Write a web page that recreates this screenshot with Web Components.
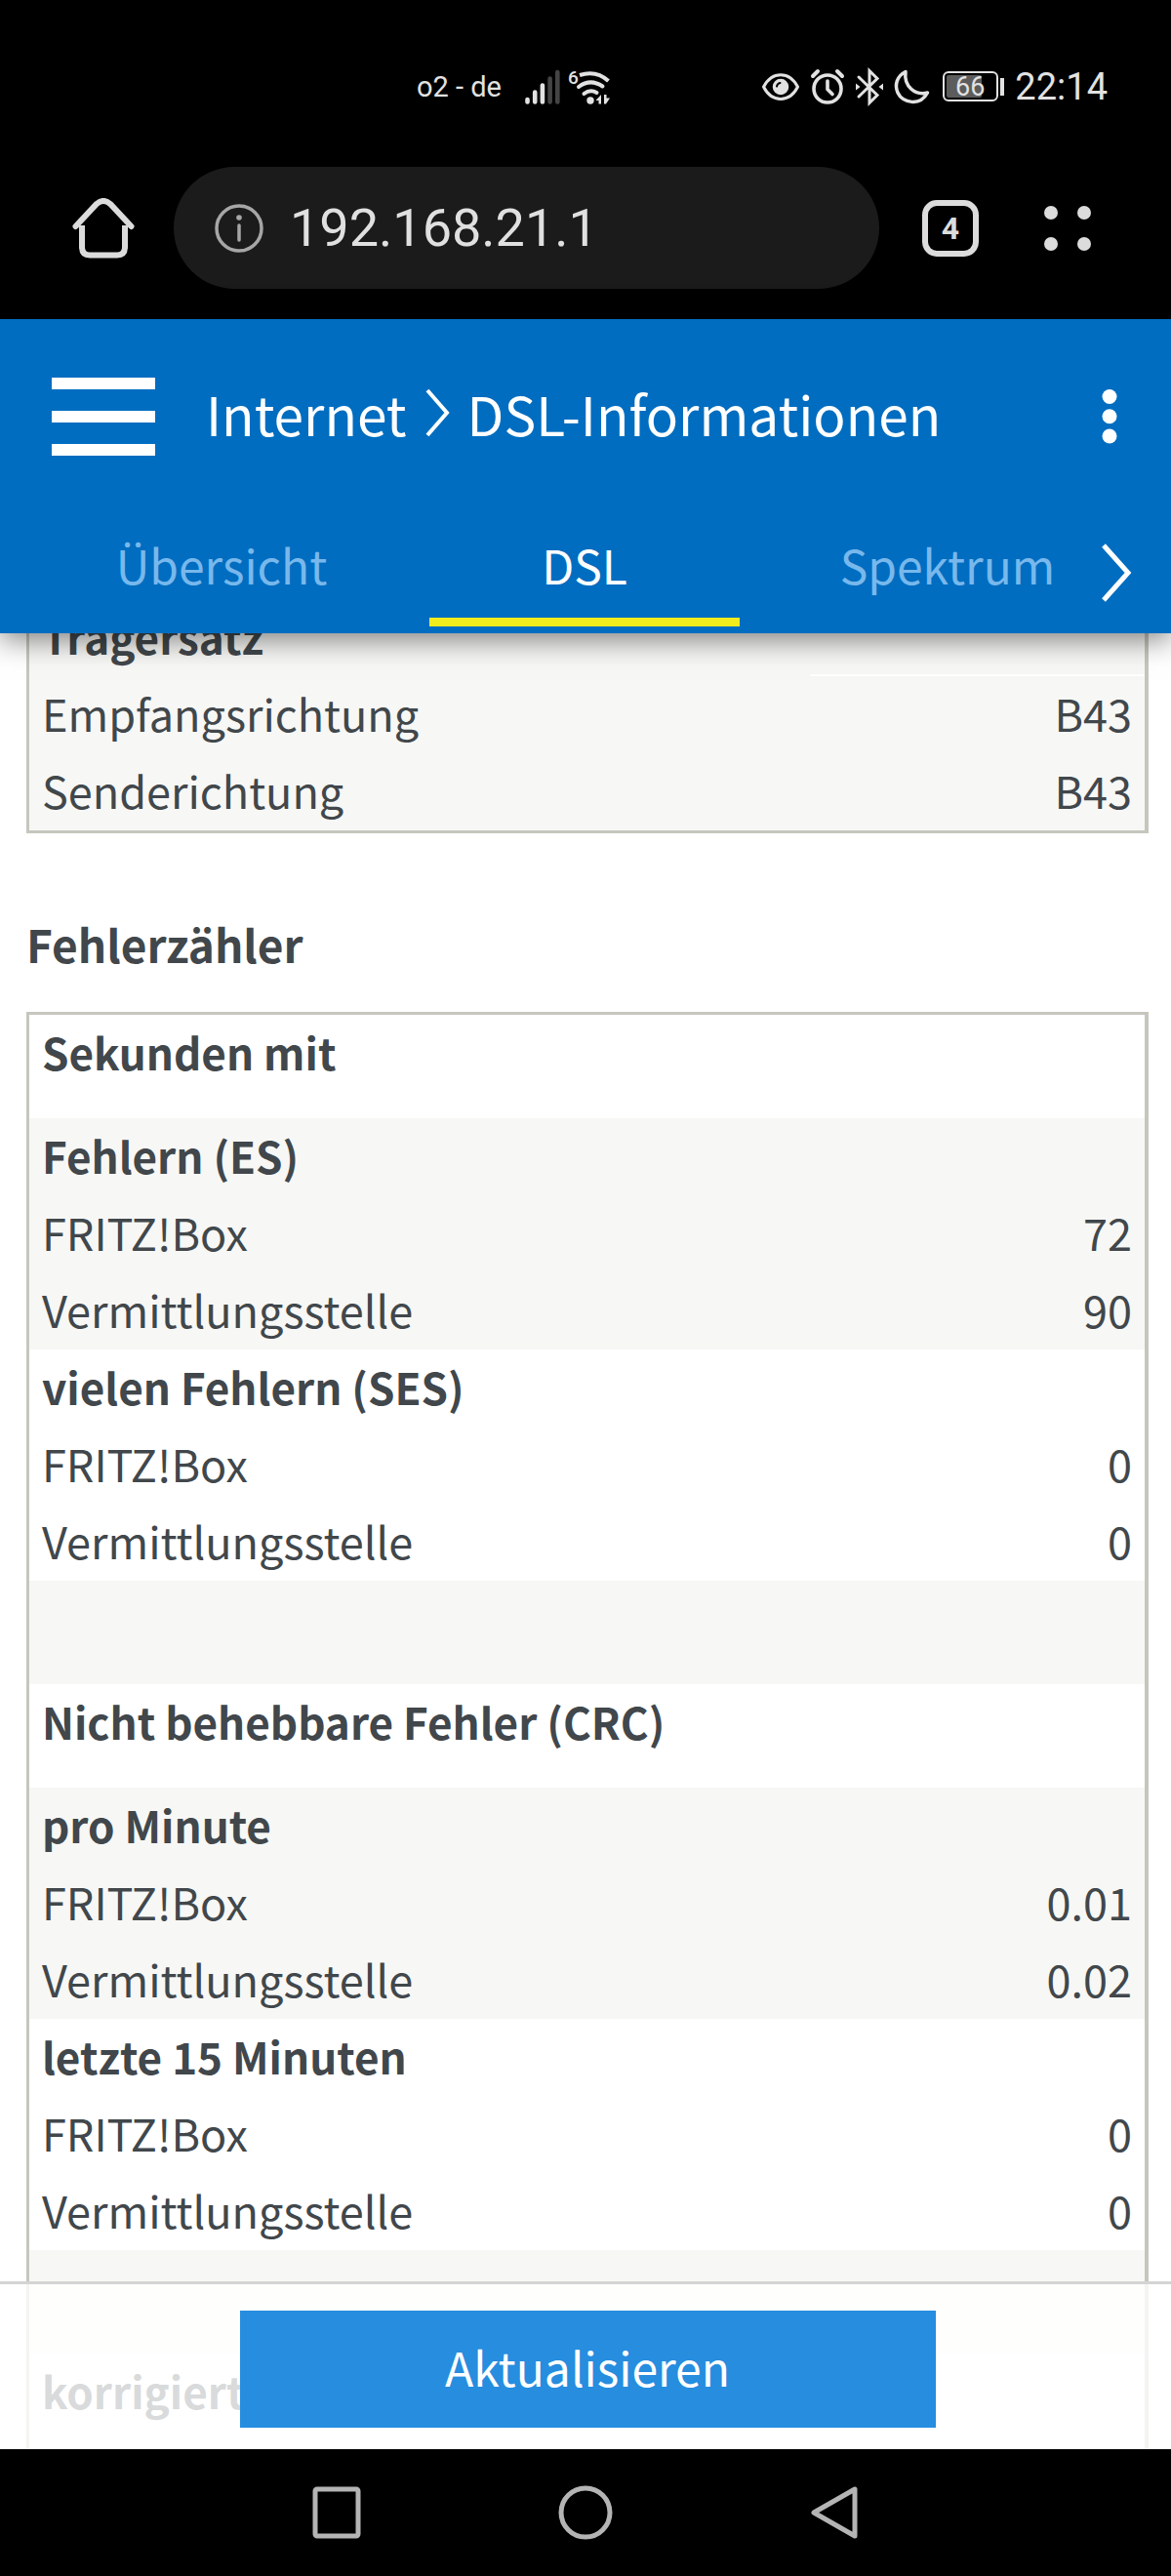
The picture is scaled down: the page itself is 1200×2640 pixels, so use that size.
<!DOCTYPE html>
<html lang="de">
<head>
<meta charset="utf-8">
<meta name="viewport" content="width=device-width, initial-scale=1">
<title>DSL-Informationen</title>
<style>
  body { margin: 0; background: #000; }
</style>
</head>
<body>
<phone-screen>
  <status-bar slot="top"></status-bar>
  <browser-bar slot="top" address="192.168.21.1" tabs="4"></browser-bar>
  <app-header slot="top" parent="Internet" current="DSL-Informationen">
    <tab-link>Übersicht</tab-link>
    <tab-link active>DSL</tab-link>
    <tab-link>Spektrum</tab-link>
  </app-header>
  <dsl-table class="scrolled" id="carrier" label="Trägersatz"></dsl-table>
  <section-title>Fehlerzähler</section-title>
  <dsl-table id="errors" label="Fehlerzähler"></dsl-table>
  <action-bar slot="actions">Aktualisieren</action-bar>
  <system-nav slot="bottom"></system-nav>
</phone-screen>

<script>
const reset = `
  :host, *, *::before { box-sizing: border-box; }
  button { margin: 0; padding: 0; border: 0; background: none; font: inherit; color: inherit; display: block; }
  a { color: inherit; text-decoration: none; }
  svg { display: block; flex: none; }
`;

class Base extends HTMLElement {
  constructor() {
    super();
    this.attachShadow({ mode: 'open' });
  }
  connectedCallback() {
    this.shadowRoot.innerHTML = `<style>${reset}${this.css()}</style>${this.html()}`;
  }
}

customElements.define('phone-screen', class extends Base {
  css() { return `
    :host {
      display: flex; flex-direction: column; height: 100vh; overflow: hidden;
      font-family: "Source Sans Pro", "Noto Sans CJK SC", sans-serif;
      font-size: 45px; color: #41474b;
    }
    main { flex: 1; min-height: 0; position: relative; background: #fff; }
    .scroll { height: 100%; overflow: hidden; padding: 0 23px 0 27px; }
    ::slotted(.scrolled) { margin-top: -35px; }
  `; }
  html() { return `
    <slot name="top"></slot>
    <main><div class="scroll"><slot></slot></div><slot name="actions"></slot></main>
    <slot name="bottom"></slot>
  `; }
});

customElements.define('status-bar', class extends Base {
  css() { return `
    :host {
      display: flex; align-items: center; height: 150px; padding: 28px 65px 0 427px;
      background: #000; color: #e2e2e2; font-family: Roboto, sans-serif; font-size: 29px;
    }
    .left, .right { display: flex; align-items: center; }
    .left { gap: 8px; }
    .left span { margin-right: 16px; }
    .right { gap: 10px; margin-left: auto; }
    time { font-size: 38px; line-height: 44px; }
    svg { fill: none; stroke: #e2e2e2; stroke-linecap: round; stroke-linejoin: round; overflow: visible; }
    text { fill: #e2e2e2; stroke: none; font-family: Roboto, sans-serif; }
  `; }
  html() { return `
    <div class="left">
      <span>o2 - de</span>
      <svg width="36" height="36" viewBox="0 0 36 36" stroke-width="4.6">
        <path d="M2.5 31v2.5M10.2 23.500v10M17.900 16.500v17"/>
        <path stroke="#444" d="M25.600 9.500v24M33.300 3v30.500"/>
      </svg>
      <svg width="44" height="38" viewBox="0 0 44 38" stroke-width="4" stroke-linecap="butt">
        <path stroke-linecap="butt" d="M12 7Q29 1.500 41.500 13"/>
        <path d="M11 19Q23 10 35.500 18.500"/>
        <path d="M16.500 26Q23 21 29.500 25"/>
        <circle cx="23" cy="33" r="3.700" fill="#e2e2e2" stroke="none"/>
        <path fill="#e2e2e2" stroke="none" d="M34 27v9.500h-2.500V33H28.500zM37 27h2.500v3.500H43l-4 6H37z"/>
        <text x="0" y="16" font-size="19" font-weight="500">6</text>
      </svg>
    </div>
    <div class="right">
      <svg width="40" height="36" viewBox="0 0 40 36" stroke-width="3">
        <path d="M2.500 18C11 1.500 29 1.500 37.500 18C29 34.500 11 34.500 2.500 18z"/>
        <circle cx="20" cy="18" r="7.500" fill="#e2e2e2" stroke-width="1.500"/>
        <path stroke="#000" stroke-width="2" d="M16 17.500Q16.500 14.500 19.500 14"/>
      </svg>
      <svg width="36" height="36" viewBox="0 0 36 36" stroke-width="3.600">
        <circle cx="18" cy="20" r="14"/><path d="M18 12v8.500l5 5"/>
        <path stroke-width="4" d="M3 7l5-5M28 2l5 5"/>
      </svg>
      <svg width="30" height="38" viewBox="0 0 30 38" stroke-width="3">
        <path stroke-linejoin="miter" d="M4 9l19 18.500-8 8V2.500l8 8L4 29"/>
        <path fill="#e2e2e2" stroke="none" d="M1 15.500l4.500 3.500L1 22.500zM29 15.500L24.500 19l4.500 3.500z"/>
      </svg>
      <svg width="38" height="36" viewBox="0 0 38 36" stroke-width="3.500">
        <path d="M12 2.500C3 7 .500 16 4 24C9 35 27 38 34.500 24C22 27 10 18 12 2.500z"/>
      </svg>
      <svg width="66" height="34" viewBox="0 0 66 34" stroke-width="2">
        <rect x="3" y="2" width="55" height="29" rx="5"/>
        <rect x="6" y="5" width="36" height="23" rx="2" fill="#5c5c5c" stroke="none"/>
        <path stroke-width="4" stroke-linecap="butt" d="M63 8v18"/>
        <text x="15" y="26" font-size="27">66</text>
      </svg>
      <time>22:14</time>
    </div>
  `; }
});

customElements.define('browser-bar', class extends Base {
  css() { return `
    :host {
      display: flex; align-items: center; height: 177px; padding: 0 81px 10px 74px;
      background: #000; color: #dcdcdc; font-family: Roboto, sans-serif;
    }
    label {
      flex: 1; min-width: 0; display: flex; align-items: center; gap: 27px; height: 125px;
      margin: 0 44px 0 40px; padding: 0 42px; border-radius: 63px; background: #1b1b1b;
    }
    input {
      flex: 1; min-width: 0; border: 0; padding: 0; outline: 0; background: none;
      color: #e0e0e0; font: 54px/70px Roboto, sans-serif;
    }
    .count {
      width: 58px; height: 58px; border: 6px solid #dcdcdc; border-radius: 15px;
      font-size: 32px; line-height: 46px; font-weight: 700; text-align: center;
    }
    .menu { margin-left: 66px; }
  `; }
  html() { return `
    <button aria-label="Startseite">
      <svg width="64" height="62" viewBox="0 0 64 62" fill="none" stroke="#dcdcdc" stroke-width="6" stroke-linecap="round">
        <path d="M3.500 29L25 6Q32 0 39 6L60.500 29"/>
        <path stroke-linecap="butt" d="M10 28V50Q10 58.500 18 58.500H46Q54 58.500 54 50V28"/>
      </svg>
    </button>
    <label>
      <svg width="50" height="50" viewBox="0 0 50 50" fill="none" stroke="#a6a6a6" stroke-width="3.500">
        <circle cx="25" cy="25" r="23"/><path stroke-linecap="round" d="M25 22v15"/>
        <circle cx="25" cy="14" r="2.800" fill="#a6a6a6" stroke="none"/>
      </svg>
      <input type="text" aria-label="Adresse" value="${this.getAttribute('address')}">
    </label>
    <button class="count">${this.getAttribute('tabs')}</button>
    <button class="menu" aria-label="Menü">
      <svg width="50" height="48" viewBox="0 0 50 48" fill="#dcdcdc">
        <circle cx="8" cy="8" r="7"/><circle cx="42" cy="8" r="7"/>
        <circle cx="8" cy="40" r="7"/><circle cx="42" cy="40" r="7"/>
      </svg>
    </button>
  `; }
});

customElements.define('app-header', class extends Base {
  css() { return `
    :host {
      display: block; position: relative; z-index: 1; background: #006dc0; color: #fff;
      box-shadow: 0 6px 28px rgba(0, 0, 0, .5);
    }
    .bar { display: flex; align-items: center; height: 200px; padding: 0 53px; }
    .crumbs {
      display: flex; align-items: center; gap: 17px; margin: 0 auto 0 52px; padding-bottom: 8px;
      font-size: 55px; line-height: 80px;
    }
    .tabs { position: relative; display: grid; grid-template-columns: repeat(3, 1fr); padding: 0 43px 0 41px; }
    .next { position: absolute; right: 40px; top: 30px; }
  `; }
  html() { return `
    <div class="bar">
      <button aria-label="Navigation">
        <svg width="106" height="80" viewBox="0 0 106 80" fill="#fff">
          <path d="M0 0h106v12H0zM0 34h106v12H0zM0 68h106v12H0z"/>
        </svg>
      </button>
      <nav class="crumbs">
        <a href="#">${this.getAttribute('parent')}</a>
        <svg width="28" height="50" viewBox="0 0 28 50" fill="none" stroke="#fff" stroke-width="4"><path d="M4 2l20 23L4 48"/></svg>
        <a href="#">${this.getAttribute('current')}</a>
      </nav>
      <button aria-label="Weitere Optionen">
        <svg width="19" height="56" viewBox="0 0 19 56" fill="#fff">
          <circle cx="9" cy="7.500" r="7.500"/><circle cx="9" cy="27.800" r="7.500"/><circle cx="9" cy="48" r="7.500"/>
        </svg>
      </button>
    </div>
    <nav class="tabs">
      <slot></slot>
      <button class="next" aria-label="Weitere Reiter">
        <svg width="32" height="60" viewBox="0 0 32 60" fill="none" stroke="#fff" stroke-width="5"><path d="M3 2l25 28L3 58"/></svg>
      </button>
    </nav>
  `; }
});

customElements.define('tab-link', class extends Base {
  css() { return `
    :host { display: block; padding-bottom: 7px; color: #78b8ec; font-size: 48px; line-height: 102px; text-align: center; }
    :host([active]) { color: #fff; }
    a { display: block; }
    a::after { content: ""; display: block; width: 318px; height: 9px; margin: 4px auto 0; }
    :host([active]) a::after { background: #f3ec1c; }
  `; }
  html() { return `<a href="#"><slot></slot></a>`; }
});

customElements.define('section-title', class extends Base {
  css() { return `
    :host { display: block; margin: 75px 0 32px; }
    h2 { margin: 0; font-size: 46px; line-height: 76px; font-weight: 600; }
  `; }
  html() { return `<h2><slot></slot></h2>`; }
});

customElements.define('dsl-table', class extends Base {
  set groups(value) {
    this._groups = value;
    if (this.isConnected) this.connectedCallback();
  }
  css() { return `
    :host { display: block; border: 3px solid #c6c6be; border-right-width: 4px; }
    :host(.scrolled) { border-top: 0; }
    table { width: 100%; border-collapse: separate; border-spacing: 0; }
    th, td { height: 79px; padding: 0 13px 3px; line-height: 76px; font-weight: 400; text-align: left; vertical-align: top; }
    td { width: 30%; text-align: right; }
    .bold th { font-size: 44px; font-weight: 600; }
    .tall th, .tall td { height: 106px; }
    .ruled td { border-bottom: 2px solid #fff; }
    .shade { background: #f7f7f5; }
  `; }
  html() {
    return `<table aria-label="${this.getAttribute('label')}">` + (this._groups || []).map(g => `
      <tbody class="${g.shade ? 'shade' : ''}">
        <tr class="bold ${g.rows ? '' : 'tall'} ${g.ruled ? 'ruled' : ''}"><th scope="col">${g.title || ''}</th><td></td></tr>
        ${(g.rows || []).map(([k, v]) => `<tr><th scope="row">${k}</th><td>${v}</td></tr>`).join('')}
      </tbody>`).join('') + `</table>`;
  }
});

customElements.define('action-bar', class extends Base {
  css() { return `
    :host {
      display: block; position: absolute; left: 0; right: 0; bottom: 0; padding: 27px 23px 22px 27px;
      border-top: 3px solid #d4d4d4; background: rgba(255, 255, 255, .8); background-clip: padding-box;
    }
    button {
      width: 62%; height: 120px; margin: 0 auto; padding-bottom: 6px; background: #268ddf; color: #fff;
      font-size: 48px; line-height: 112px;
    }
  `; }
  html() { return `<button><slot></slot></button>`; }
});

customElements.define('system-nav', class extends Base {
  css() { return `
    :host { display: flex; justify-content: center; align-items: center; gap: 200px; height: 130px; background: #000; }
    svg { fill: none; stroke: #b4b4b4; stroke-width: 5; stroke-linejoin: round; }
  `; }
  html() { return `
    <button aria-label="Letzte Apps"><svg width="54" height="56" viewBox="0 0 54 56"><rect x="5" y="4" width="44" height="48" rx="2"/></svg></button>
    <button aria-label="Start"><svg width="56" height="56" viewBox="0 0 56 56"><circle cx="28" cy="28" r="25"/></svg></button>
    <button aria-label="Zurück"><svg width="54" height="56" viewBox="0 0 54 56"><path d="M48 4v48L6 28z"/></svg></button>
  `; }
});

document.getElementById('carrier').groups = [
  { title: 'Trägersatz', shade: true, ruled: true, rows: [['Empfangsrichtung', 'B43'], ['Senderichtung', 'B43']] }
];
document.getElementById('errors').groups = [
  { title: 'Sekunden mit' },
  { title: 'Fehlern (ES)', shade: true, rows: [['FRITZ!Box', '72'], ['Vermittlungsstelle', '90']] },
  { title: 'vielen Fehlern (SES)', rows: [['FRITZ!Box', '0'], ['Vermittlungsstelle', '0']] },
  { shade: true },
  { title: 'Nicht behebbare Fehler (CRC)' },
  { title: 'pro Minute', shade: true, rows: [['FRITZ!Box', '0.01'], ['Vermittlungsstelle', '0.02']] },
  { title: 'letzte 15 Minuten', rows: [['FRITZ!Box', '0'], ['Vermittlungsstelle', '0']] },
  { shade: true },
  { title: 'korrigiert' }
];
</script>
</body>
</html>
